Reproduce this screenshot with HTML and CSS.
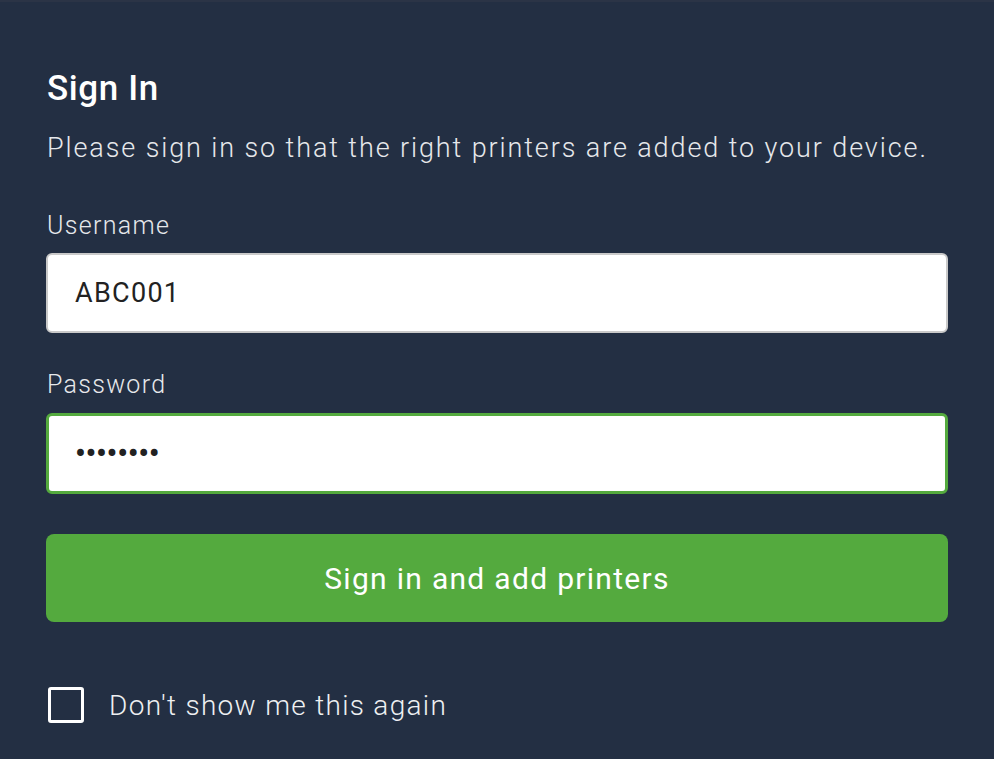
FILE: index.html
```html
<!DOCTYPE html>
<html lang="en">
<head>
<meta charset="utf-8">
<title>Sign In</title>
<link rel="stylesheet" href="styles.css">
</head>
<body>
<main class="panel">
  <h1 class="title">Sign In</h1>
  <p class="subtitle">Please sign in so that the right printers are added to your device.</p>
  <label class="label" for="user">Username</label>
  <input class="field" id="user" type="text" value="ABC001">
  <label class="label label-pw" for="pw">Password</label>
  <input class="field field-active" id="pw" type="password" value="password">
  <button class="submit" type="button">Sign in and add printers</button>
  <label class="check">
    <span class="box"></span>
    <span class="check-text">Don't show me this again</span>
  </label>
</main>
</body>
</html>
```

FILE: styles.css
```css
html, body {
  margin: 0;
  padding: 0;
  background: #232f43;
}
body {
  font-family: Roboto, "Liberation Sans", sans-serif;
  color: #e8eaed;
}
.panel {
  border-top: 2px solid #2b3446;
  height: 757px;
  box-sizing: border-box;
  padding: 0 46px;
  display: flex;
  flex-direction: column;
}
.title {
  margin: 67px 0 0 1px;
  font-size: 35px;
  line-height: 40px;
  font-weight: 500;
  letter-spacing: 0.6px;
  color: #ffffff;
}
.subtitle {
  margin: 22px 0 0 1px;
  font-size: 27px;
  line-height: 34px;
  font-weight: 300;
  letter-spacing: 1.9px;
  color: #e6e8eb;
}
.label {
  margin: 47px 0 0 1px;
  font-size: 25px;
  line-height: 28px;
  font-weight: 300;
  letter-spacing: 1.3px;
  color: #e6e8eb;
}
.label-pw {
  margin-top: 38px;
}
.field {
  margin-top: 13px;
  height: 80px;
  box-sizing: border-box;
  border: 2px solid #c9c9c9;
  border-radius: 6px;
  background: #fff;
  padding: 0 27px;
  font-family: Roboto, "Liberation Sans", sans-serif;
  font-size: 27px;
  font-weight: 400;
  letter-spacing: 1.3px;
  color: #222;
  outline: none;
}
.field-active {
  margin-top: 14px;
  height: 81px;
  border: 3px solid #54aa3e;
  padding: 0 26px;
  font-size: 31px;
  font-weight: 500;
  letter-spacing: -0.3px;
}
.submit {
  margin-top: 40px;
  height: 88px;
  border: none;
  border-radius: 8px;
  background: #54aa3e;
  color: #fff;
  font-family: Roboto, "Liberation Sans", sans-serif;
  font-size: 30px;
  font-weight: 400;
  letter-spacing: 1.3px;
  cursor: pointer;
}
.check {
  margin-top: 65px;
  display: flex;
  align-items: center;
  gap: 25px;
}
.box {
  width: 36px;
  height: 36px;
  box-sizing: border-box;
  border: 3px solid #fff;
  border-radius: 3px;
  margin-left: 2px;
}
.check-text {
  font-size: 28px;
  font-weight: 300;
  letter-spacing: 1.3px;
  color: #eef0f2;
}
```
